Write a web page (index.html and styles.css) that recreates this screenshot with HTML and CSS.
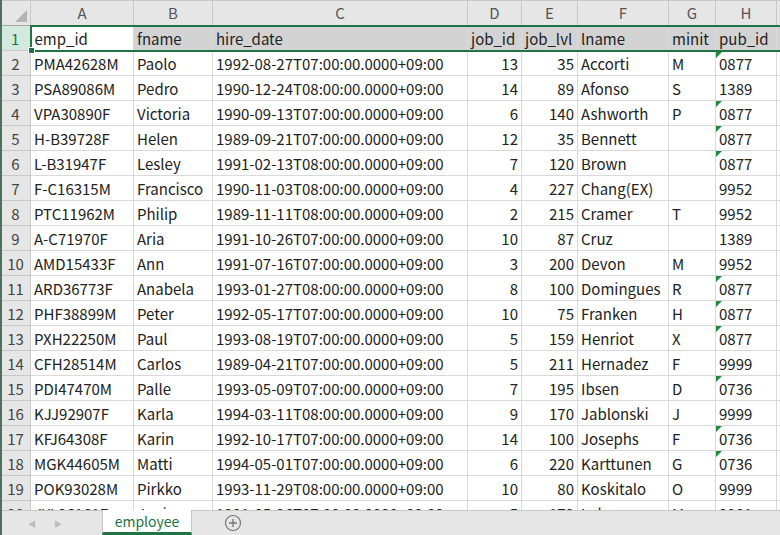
FILE: index.html
```html
<!DOCTYPE html>
<html lang="ja">
<head>
    <meta charset="UTF-8">
    <meta name="viewport" content="width=device-width, initial-scale=1.0">
    <title>employee</title>
    <link rel="stylesheet" href="styles.css">
</head>
<body>
    <div class="sheet">
        <table class="grid">
            <colgroup>
                <col class="c-row">
                <col class="c-a">
                <col class="c-b">
                <col class="c-c">
                <col class="c-d">
                <col class="c-e">
                <col class="c-f">
                <col class="c-g">
                <col class="c-h">
                <col class="c-i">
            </colgroup>
            <thead>
                <tr>
                    <th class="corner"></th>
                    <th>A</th><th>B</th><th>C</th><th>D</th><th>E</th><th>F</th><th>G</th><th>H</th><th></th>
                </tr>
            </thead>
            <tbody>
                <tr class="selected">
                    <th class="row-sel">1</th>
                    <td class="active">emp_id<span class="handle"></span></td><td>fname</td><td>hire_date</td><td>job_id</td><td>job_lvl</td><td>lname</td><td>minit</td><td>pub_id</td><td></td>
                </tr>
                <tr><th>2</th><td>PMA42628M</td><td>Paolo</td><td>1992-08-27T07:00:00.0000+09:00</td><td class="num">13</td><td class="num">35</td><td>Accorti</td><td>M</td><td class="warn">0877</td><td></td></tr>
                <tr><th>3</th><td>PSA89086M</td><td>Pedro</td><td>1990-12-24T08:00:00.0000+09:00</td><td class="num">14</td><td class="num">89</td><td>Afonso</td><td>S</td><td>1389</td><td></td></tr>
                <tr><th>4</th><td>VPA30890F</td><td>Victoria</td><td>1990-09-13T07:00:00.0000+09:00</td><td class="num">6</td><td class="num">140</td><td>Ashworth</td><td>P</td><td class="warn">0877</td><td></td></tr>
                <tr><th>5</th><td>H-B39728F</td><td>Helen</td><td>1989-09-21T07:00:00.0000+09:00</td><td class="num">12</td><td class="num">35</td><td>Bennett</td><td></td><td class="warn">0877</td><td></td></tr>
                <tr><th>6</th><td>L-B31947F</td><td>Lesley</td><td>1991-02-13T08:00:00.0000+09:00</td><td class="num">7</td><td class="num">120</td><td>Brown</td><td></td><td class="warn">0877</td><td></td></tr>
                <tr><th>7</th><td>F-C16315M</td><td>Francisco</td><td>1990-11-03T08:00:00.0000+09:00</td><td class="num">4</td><td class="num">227</td><td>Chang(EX)</td><td></td><td>9952</td><td></td></tr>
                <tr><th>8</th><td>PTC11962M</td><td>Philip</td><td>1989-11-11T08:00:00.0000+09:00</td><td class="num">2</td><td class="num">215</td><td>Cramer</td><td>T</td><td>9952</td><td></td></tr>
                <tr><th>9</th><td>A-C71970F</td><td>Aria</td><td>1991-10-26T07:00:00.0000+09:00</td><td class="num">10</td><td class="num">87</td><td>Cruz</td><td></td><td>1389</td><td></td></tr>
                <tr><th>10</th><td>AMD15433F</td><td>Ann</td><td>1991-07-16T07:00:00.0000+09:00</td><td class="num">3</td><td class="num">200</td><td>Devon</td><td>M</td><td>9952</td><td></td></tr>
                <tr><th>11</th><td>ARD36773F</td><td>Anabela</td><td>1993-01-27T08:00:00.0000+09:00</td><td class="num">8</td><td class="num">100</td><td>Domingues</td><td>R</td><td class="warn">0877</td><td></td></tr>
                <tr><th>12</th><td>PHF38899M</td><td>Peter</td><td>1992-05-17T07:00:00.0000+09:00</td><td class="num">10</td><td class="num">75</td><td>Franken</td><td>H</td><td class="warn">0877</td><td></td></tr>
                <tr><th>13</th><td>PXH22250M</td><td>Paul</td><td>1993-08-19T07:00:00.0000+09:00</td><td class="num">5</td><td class="num">159</td><td>Henriot</td><td>X</td><td class="warn">0877</td><td></td></tr>
                <tr><th>14</th><td>CFH28514M</td><td>Carlos</td><td>1989-04-21T07:00:00.0000+09:00</td><td class="num">5</td><td class="num">211</td><td>Hernadez</td><td>F</td><td>9999</td><td></td></tr>
                <tr><th>15</th><td>PDI47470M</td><td>Palle</td><td>1993-05-09T07:00:00.0000+09:00</td><td class="num">7</td><td class="num">195</td><td>Ibsen</td><td>D</td><td class="warn">0736</td><td></td></tr>
                <tr><th>16</th><td>KJJ92907F</td><td>Karla</td><td>1994-03-11T08:00:00.0000+09:00</td><td class="num">9</td><td class="num">170</td><td>Jablonski</td><td>J</td><td>9999</td><td></td></tr>
                <tr><th>17</th><td>KFJ64308F</td><td>Karin</td><td>1992-10-17T07:00:00.0000+09:00</td><td class="num">14</td><td class="num">100</td><td>Josephs</td><td>F</td><td class="warn">0736</td><td></td></tr>
                <tr><th>18</th><td>MGK44605M</td><td>Matti</td><td>1994-05-01T07:00:00.0000+09:00</td><td class="num">6</td><td class="num">220</td><td>Karttunen</td><td>G</td><td class="warn">0736</td><td></td></tr>
                <tr><th>19</th><td>POK93028M</td><td>Pirkko</td><td>1993-11-29T08:00:00.0000+09:00</td><td class="num">10</td><td class="num">80</td><td>Koskitalo</td><td>O</td><td>9999</td><td></td></tr>
                <tr><th>20</th><td>JYL26161F</td><td>Janine</td><td>1991-05-26T07:00:00.0000+09:00</td><td class="num">5</td><td class="num">172</td><td>Labrune</td><td>M</td><td>9901</td><td></td></tr>
            </tbody>
        </table>
    </div>
    <div class="tabbar">
        <div class="nav">
            <span class="arrow">&#9664;</span>
            <span class="arrow">&#9654;</span>
        </div>
        <div class="tab">employee</div>
        <div class="add">
            <svg width="18" height="18" viewBox="0 0 18 18">
                <circle cx="9" cy="9" r="7.5" fill="none" stroke="#777" stroke-width="1.2"/>
                <path d="M9 5v8M5 9h8" stroke="#777" stroke-width="1.4"/>
            </svg>
        </div>
    </div>
</body>
</html>
```
FILE: styles.css
```css
body {
    margin: 0;
    padding: 0;
    width: 780px;
    height: 535px;
    overflow: hidden;
    display: flex;
    flex-direction: column;
    font-family: "Noto Sans CJK JP", "Noto Sans", sans-serif;
    font-size: 15px;
    color: #222;
    background-color: #fff;
    border-left: 2px solid #4f6f5f;
    box-sizing: border-box;
}

.sheet {
    height: 510px;
    overflow: hidden;
    flex-shrink: 0;
}

.grid {
    border-collapse: collapse;
    table-layout: fixed;
    width: 830px;
    margin-left: -2px;
}

.c-row { width: 30px; }
.c-a { width: 103px; }
.c-b { width: 79px; }
.c-c { width: 255px; }
.c-d { width: 54px; }
.c-e { width: 56px; }
.c-f { width: 91px; }
.c-g { width: 47px; }
.c-h { width: 61px; }
.c-i { width: 54px; }

.grid tr {
    height: 25px;
}

.grid th {
    background-color: #e6e6e6;
    color: #555;
    font-weight: normal;
    border: 1px solid #c8c8c8;
    text-align: center;
    padding: 0;
    font-size: 15px;
    line-height: 23px;
}

.grid tbody th {
    color: #444;
}

.grid thead th {
    border-bottom-color: #a8a8a8;
}

.grid td {
    border: 1px solid #d9d9d9;
    padding: 0 3px;
    white-space: nowrap;
    overflow: hidden;
    line-height: 23px;
    position: relative;
}

.grid td.num {
    text-align: right;
}

.corner {
    position: relative;
}

.corner::after {
    content: "";
    position: absolute;
    right: 3px;
    bottom: 3px;
    border-style: solid;
    border-width: 0 0 12px 12px;
    border-color: transparent transparent #b4b4b4 transparent;
}

.selected td {
    background-color: #d3d3d3;
    border-top: 2px solid #217346;
    border-bottom: 2px solid #217346;
}

.selected td.active {
    background-color: #fff;
    overflow: visible;
}

.grid th.row-sel {
    background-color: #d2eadd;
    color: #217346;
    border-right: 2px solid #217346;
}

.handle {
    position: absolute;
    left: -4px;
    bottom: -4px;
    width: 5px;
    height: 5px;
    background-color: #217346;
    border: 1px solid #fff;
    z-index: 2;
}

.warn::before {
    content: "";
    position: absolute;
    left: 0;
    top: 0;
    border-style: solid;
    border-width: 6px 6px 0 0;
    border-color: #1e8a3c transparent transparent transparent;
}

.tabbar {
    height: 25px;
    flex-shrink: 0;
    background-color: #e6e6e6;
    border-top: 1px solid #c6c6c6;
    box-sizing: border-box;
    display: flex;
    align-items: stretch;
}

.nav {
    width: 100px;
    display: flex;
    align-items: center;
    gap: 18px;
    padding-left: 26px;
    box-sizing: border-box;
}

.arrow {
    font-size: 8px;
    color: #bcbcbc;
}

.tab {
    width: 90px;
    margin-top: -1px;
    background-color: #fff;
    color: #217346;
    text-align: center;
    font-size: 14px;
    line-height: 22px;
    border-left: 1px solid #c6c6c6;
    border-right: 1px solid #c6c6c6;
    border-bottom: 3px solid #217346;
    box-sizing: border-box;
}

.add {
    display: flex;
    align-items: center;
    padding-left: 32px;
}
```
